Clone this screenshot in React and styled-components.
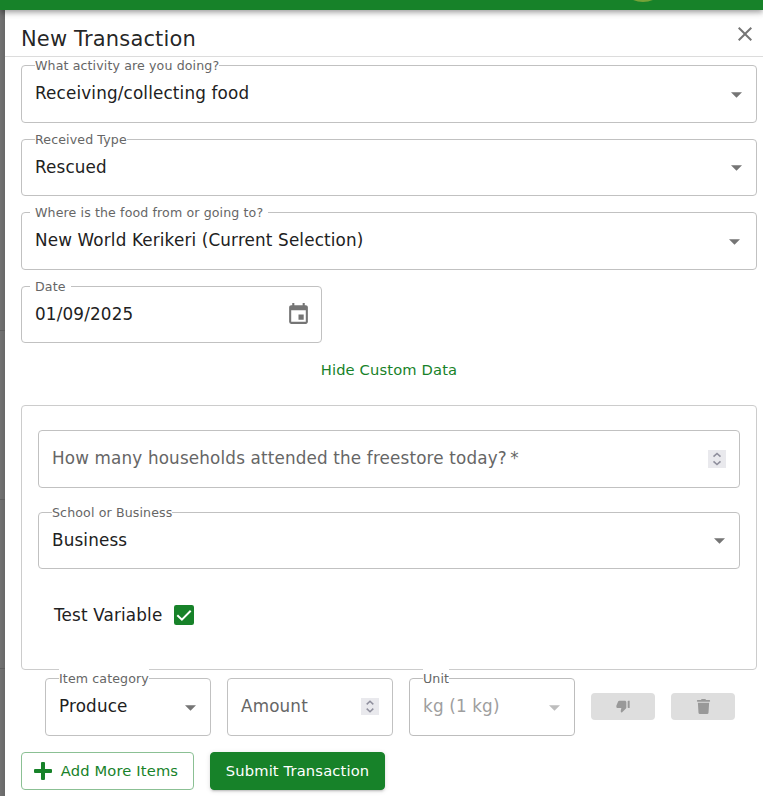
import React from 'react';
import styled, { createGlobalStyle } from 'styled-components';
import { MdEvent, MdClose } from 'react-icons/md';
import { FaTrash } from 'react-icons/fa';

const GlobalStyle = createGlobalStyle`
  *, *::before, *::after { box-sizing: border-box; }
  body {
    margin: 0;
    overflow: hidden;
    font-family: "DejaVu Sans", Verdana, sans-serif;
    color: rgba(0, 0, 0, 0.87);
  }
`;

const Page = styled.div`
  display: flex;
  flex-direction: column;
  height: 796px;
  background: #6f6f6f;
`;

const AppBar = styled.header`
  position: relative;
  z-index: 2;
  display: flex;
  flex: none;
  justify-content: center;
  height: 10px;
  padding-left: 522px;
  background: #178229;
  box-shadow: 0 2px 4px -1px rgba(0, 0, 0, 0.2), 0 4px 5px rgba(0, 0, 0, 0.14), 0 1px 10px rgba(0, 0, 0, 0.12);
`;

const Avatar = styled.svg`
  width: 24px;
  height: 3px;
`;

const Body = styled.div`
  display: flex;
  flex: 1;
  min-height: 0;
`;

const Backdrop = styled.div`
  display: grid;
  grid-template-rows: 320px 169px 169px 1fr;
  width: 5px;
  background: linear-gradient(90deg, #727272, #686868);
`;

const BackdropRow = styled.div`
  border-bottom: 1px solid #5e5e5e;
  transform: translateY(1px);
`;

const Dialog = styled.main`
  flex: 1;
  min-width: 0;
  background: #fff;
`;

const TitleBar = styled.div`
  position: relative;
  z-index: 1;
  display: flex;
  align-items: center;
  justify-content: space-between;
  height: 47px;
  padding: 0 6px 0 16px;
  border-bottom: 1px solid #dcdcdc;
`;

const Title = styled.h1`
  margin: 11px 0 0;
  font-size: 21px;
  line-height: 32px;
  font-weight: 400;
  letter-spacing: 0.0075em;
`;

const CloseButton = styled.button`
  display: flex;
  padding: 0;
  border: 0;
  background: none;
  color: #757575;
  margin-top: 2px;
`;

const Form = styled.form`
  display: flex;
  flex-direction: column;
  padding: 8px 6px 0 16px;
`;

const Field = styled.div`
  position: relative;
  display: flex;
  flex: none;
  align-items: center;
  justify-content: space-between;
  width: ${(p) => p.$width || 'auto'};
  height: ${(p) => p.$height || 58}px;
  margin-bottom: ${(p) => p.$gap || 0}px;
  padding: 0 ${(p) => p.$end || 13}px 0 13px;
  border: 1px solid ${(p) => (p.$disabled ? '#bdbdbd' : '#c1c1c1')};
  border-radius: 4px;
`;

const FieldLabel = styled.label`
  position: absolute;
  top: -10px;
  left: ${(p) => (p.$roomy ? 8 : 13)}px;
  padding: 1px ${(p) => (p.$roomy ? 5 : 0)}px 0;
  background: #fff;
  color: #666;
  font-size: 12.6px;
  line-height: 18px;
  letter-spacing: 0.00938em;
  white-space: nowrap;
`;

const Value = styled.span`
  font-size: 16.8px;
  line-height: 24px;
  letter-spacing: 0.00938em;
  margin-bottom: ${(p) => (p.$flush ? 0 : 1.6)}px;
  white-space: nowrap;
  color: ${(p) => (p.$disabled ? '#9e9e9e' : p.$placeholder ? '#666' : '#212121')};
`;

const Arrow = styled.svg`
  width: 11px;
  height: 6px;
  margin-top: 1px;
  fill: ${(p) => (p.$disabled ? '#bdbdbd' : '#757575')};
`;

const Stepper = styled.svg`
  width: 18px;
  height: ${(p) => p.$height || 18}px;
  margin-bottom: ${(p) => p.$lift || 0}px;
  background: #e9e9ed;
  fill: none;
  stroke: #8f8f9d;
  stroke-width: 1.6;
`;

const CalendarButton = styled.span`
  display: flex;
  color: #757575;
`;

const ToggleLink = styled.button`
  align-self: center;
  height: 62px;
  padding: 0 0 9px;
  border: 0;
  background: none;
  color: #178229;
  font: 14.7px/24px "DejaVu Sans", Verdana, sans-serif;
  letter-spacing: 0.01em;
`;

const CustomPanel = styled.section`
  height: 265px;
  padding: 24px 16px 0;
  border: 1px solid #ccc;
  border-radius: 4px;
`;

const CheckRow = styled.div`
  display: flex;
  align-items: center;
  gap: 12px;
  margin-top: 34px;
  padding-left: 16px;
`;

const CheckBox = styled.svg`
  width: 20px;
  height: 20px;
`;

const ItemRow = styled.div`
  display: flex;
  align-items: center;
  gap: 16px;
  height: 58px;
  margin: 8px 0 16px 24px;
`;

const IconButton = styled.button`
  display: flex;
  align-items: center;
  justify-content: center;
  width: 64px;
  height: 27px;
  margin-bottom: 1px;
  padding: 0 0 ${(p) => p.$lift || 0}px;
  border: 0;
  border-radius: 4px;
  background: #dedede;
  color: #999;
`;

const Actions = styled.div`
  display: flex;
  gap: 16px;
`;

const ActionButton = styled.button`
  display: flex;
  align-items: center;
  justify-content: center;
  gap: 9px;
  width: ${(p) => p.$width}px;
  height: 38px;
  padding: 0 ${(p) => (p.$filled ? 0 : 3)}px 0 0;
  border: 1px solid ${(p) => (p.$filled ? '#178229' : '#8bc094')};
  border-radius: 4px;
  background: ${(p) => (p.$filled ? '#178229' : '#fff')};
  color: ${(p) => (p.$filled ? '#fff' : '#178229')};
  font: 14.7px/24px "DejaVu Sans", Verdana, sans-serif;
  letter-spacing: 0.01em;
  white-space: nowrap;
  box-shadow: ${(p) => (p.$filled ? '0 3px 1px -2px rgba(0,0,0,.1), 0 2px 2px rgba(0,0,0,.07), 0 1px 5px rgba(0,0,0,.12)' : 'none')};
`;

const DropArrow = ({ disabled }) => (
  <Arrow $disabled={disabled} viewBox="0 0 11 6"><path d="M0 .2h11L5.5 5.7z" /></Arrow>
);

const NumberStepper = ({ height, lift }) => (
  <Stepper $height={height} $lift={lift} viewBox="0 0 18 18"><path d="M5.5 6.7L9 3.5l3.5 3.2M5.5 11.3L9 14.5l3.5-3.2" /></Stepper>
);

const ThumbDown = () => (
  <svg width="16" height="16" viewBox="0 0 24 24" fill="currentColor">
    <path d="M22 4h-2c-.55 0-1 .45-1 1v9c0 .55.45 1 1 1h2V4zM2.17 11.12c-.11.25-.17.52-.17.8V13c0 1.1.9 2 2 2h5.5l-.92 4.65c-.05.22-.02.46.08.66.23.45.52.86.88 1.22L10 22l6.41-6.41c.38-.38.59-.89.59-1.42V6.34C17 5.05 15.95 4 14.66 4h-8.1c-.71 0-1.36.37-1.72.97l-2.67 6.15z" />
  </svg>
);

function Select({ label, value, disabled, roomy, ...rest }) {
  return (
    <Field $disabled={disabled} $end={roomy ? 16 : 14} {...rest}>
      <FieldLabel $roomy={roomy}>{label}</FieldLabel>
      <Value $disabled={disabled}>{value}</Value>
      <DropArrow disabled={disabled} />
    </Field>
  );
}

export default function App() {
  return (
    <Page>
      <GlobalStyle />
      <AppBar>
        <Avatar viewBox="0 0 24 3"><circle cx="12" cy="-24" r="26" fill="#76a338" /></Avatar>
      </AppBar>
      <Body>
        <Backdrop><BackdropRow /><BackdropRow /><BackdropRow /></Backdrop>
        <Dialog>
          <TitleBar>
            <Title>New Transaction</Title>
            <CloseButton aria-label="Close" type="button"><MdClose size={24} /></CloseButton>
          </TitleBar>
          <Form>
            <Select label="What activity are you doing?" value="Receiving/collecting food" $gap={16} />
            <Select label="Received Type" value="Rescued" $height={57} $gap={16} />
            <Select label="Where is the food from or going to?" value="New World Kerikeri (Current Selection)" roomy $gap={16} />
            <Field $width="301px" $height={57} $end={10}>
              <FieldLabel $roomy>Date</FieldLabel>
              <Value>01/09/2025</Value>
              <CalendarButton><MdEvent size={25} /></CalendarButton>
            </Field>
            <ToggleLink type="button">Hide Custom Data</ToggleLink>
            <CustomPanel>
              <Field $gap={24}>
                <Value $placeholder>How many households attended the freestore today?{'\u2009*'}</Value>
                <NumberStepper />
              </Field>
              <Select label="School or Business" value="Business" $height={57} />
              <CheckRow>
                <Value $flush>Test Variable</Value>
                <CheckBox viewBox="0 0 20 20">
                  <rect width="20" height="20" rx="2.2" fill="#178229" />
                  <path d="M3.3 10.2l4.6 4.5 8.8-8.9" fill="none" stroke="#fff" strokeWidth="2" />
                </CheckBox>
              </CheckRow>
            </CustomPanel>
            <ItemRow>
              <Select label="Item category" value="Produce" $width="166px" />
              <Field $width="166px">
                <Value $placeholder>Amount</Value>
                <NumberStepper height={17} lift={1} />
              </Field>
              <Select label="Unit" value="kg (1 kg)" disabled $width="166px" />
              <IconButton type="button" aria-label="Reject" $lift={2}><ThumbDown /></IconButton>
              <IconButton type="button" aria-label="Delete"><FaTrash size={15} /></IconButton>
            </ItemRow>
            <Actions>
              <ActionButton type="button" $width={173}>
                <svg width="18" height="18" viewBox="0 0 18 18" fill="currentColor">
                  <path d="M8 0h2q1 0 1 1v6h6q1 0 1 1v2q0 1-1 1h-6v6q0 1-1 1H8q-1 0-1-1v-6H1q-1 0-1-1V8q0-1 1-1h6V1q0-1 1-1z" />
                </svg>
                Add More Items
              </ActionButton>
              <ActionButton type="button" $filled $width={175}>Submit Transaction</ActionButton>
            </Actions>
          </Form>
        </Dialog>
      </Body>
    </Page>
  );
}
